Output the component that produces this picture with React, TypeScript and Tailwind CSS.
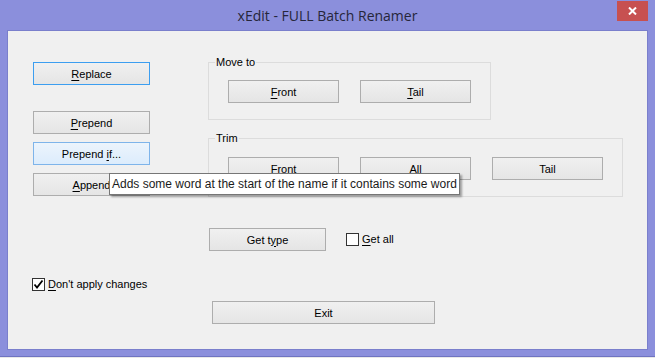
import React from "react";

type Kind = "normal" | "default" | "hover";

function Btn({
  children,
  className = "",
  kind = "normal",
}: {
  children: React.ReactNode;
  className?: string;
  kind?: Kind;
}) {
  const k =
    kind === "default"
      ? "border-[#3c9ef0] bg-gradient-to-b from-[#f0f0f0] to-[#e5e5e5]"
      : kind === "hover"
      ? "border-[#7eb4ea] bg-gradient-to-b from-[#ecf4fc] to-[#dcecfc]"
      : "border-[#adadad] bg-gradient-to-b from-[#f0f0f0] to-[#e5e5e5]";
  return (
    <div
      className={`flex h-[23px] shrink-0 items-center justify-center border text-[11px] leading-none text-black ${k} ${className}`}
    >
      <span className="pt-px">{children}</span>
    </div>
  );
}

function U({ children }: { children: React.ReactNode }) {
  return <span className="underline underline-offset-[2px]">{children}</span>;
}

function Check({ checked }: { checked?: boolean }) {
  return (
    <div className="flex h-[13px] w-[13px] shrink-0 items-center justify-center border border-[#333333] bg-white">
      {checked && (
        <svg width="11" height="11" viewBox="0 0 11 11">
          <path d="M1.5 5.5 L4 8.5 L9.5 1.5" fill="none" stroke="#000" strokeWidth="1.8" />
        </svg>
      )}
    </div>
  );
}

function Group({
  label,
  className,
  children,
}: {
  label: string;
  className: string;
  children: React.ReactNode;
}) {
  return (
    <div className={`relative border border-[#dcdcdc] ${className}`}>
      <span className="absolute left-[6px] top-[-7px] bg-[#f0f0f0] px-px text-[11px] leading-[13px] text-black">
        {label}
      </span>
      {children}
    </div>
  );
}

export default function App() {
  return (
    <div className="relative flex h-[358px] w-[655px] flex-col overflow-hidden bg-[#8b8fdc] font-['Liberation_Sans',Arial,sans-serif]">
      {/* Title bar */}
      <div className="relative flex h-[30px] shrink-0 items-center justify-center pt-[2px]">
        <span className="font-['Open_Sans',sans-serif] text-[14px] leading-none text-[#26263a]">
          xEdit - FULL Batch Renamer
        </span>
        <div className="absolute left-[617px] top-[1px] flex h-[20px] w-[31px] items-center justify-center bg-[#c75050]">
          <svg width="9" height="8" viewBox="0 0 9 8">
            <path d="M1 0.5 L8 7.5 M8 0.5 L1 7.5" stroke="#fff" strokeWidth="2" />
          </svg>
        </div>
      </div>

      {/* Client area */}
      <div className="ml-[7px] h-[320px] w-[641px] shrink-0 border border-[#7a7fcc] bg-[#f0f0f0]">
        <div className="flex flex-col pt-[31px]">
          {/* Row 1 */}
          <div className="flex">
            <div className="ml-[25px] flex w-[117px] flex-col">
              <Btn kind="default" className="w-[117px]">
                <U>R</U>eplace
              </Btn>
              <Btn className="mt-[26px] w-[117px]">
                <U>P</U>repend
              </Btn>
              <Btn kind="hover" className="mt-[8px] w-[117px]">
                Prepend <U>i</U>f...
              </Btn>
              <Btn className="mt-[8px] w-[117px]">
                <U>A</U>ppend
              </Btn>
            </div>
            <div className="ml-[58px] flex flex-col">
              <Group label="Move to" className="h-[58px] w-[283px]">
                <div className="flex gap-[21px] pl-[19px] pt-[17px]">
                  <Btn className="w-[111px]">
                    <U>F</U>ront
                  </Btn>
                  <Btn className="w-[111px]">
                    <U>T</U>ail
                  </Btn>
                </div>
              </Group>
              <Group label="Trim" className="mt-[18px] h-[59px] w-[415px]">
                <div className="flex gap-[21px] pl-[19px] pt-[18px]">
                  <Btn className="w-[111px]">Front</Btn>
                  <Btn className="w-[111px]">All</Btn>
                  <Btn className="w-[111px]">Tail</Btn>
                </div>
              </Group>
            </div>
          </div>

          {/* Row 2 */}
          <div className="ml-[201px] mt-[31px] flex items-center">
            <Btn className="w-[117px]">
              Get t<U>y</U>pe
            </Btn>
            <div className="ml-[20px] flex items-center gap-[3px]">
              <Check />
              <span className="text-[11px] leading-none text-black">
                <U>G</U>et all
              </span>
            </div>
          </div>

          {/* Row 3 */}
          <div className="ml-[24px] mt-[27px] flex items-center gap-[3px]">
            <Check checked />
            <span className="text-[11px] leading-none text-black">
              <U>D</U>on't apply changes
            </span>
          </div>

          {/* Row 4 */}
          <div className="ml-[204px] mt-[10px] flex">
            <Btn className="w-[223px]">Exit</Btn>
          </div>
        </div>
      </div>

      <div className="mt-auto h-px w-full bg-[#6f74c0]" />
      <div className="h-px w-full bg-[#e8e8e8]" />

      {/* Tooltip */}
      <div className="absolute left-[109px] top-[173px] flex h-[22px] items-center border border-[#767676] bg-white pl-[2px] pr-[2px] text-[12px] leading-none text-[#1a1a1a] shadow-[2px_2px_2px_rgba(0,0,0,0.35)]">
        Adds some word at the start of the name if it contains some word
      </div>
    </div>
  );
}
